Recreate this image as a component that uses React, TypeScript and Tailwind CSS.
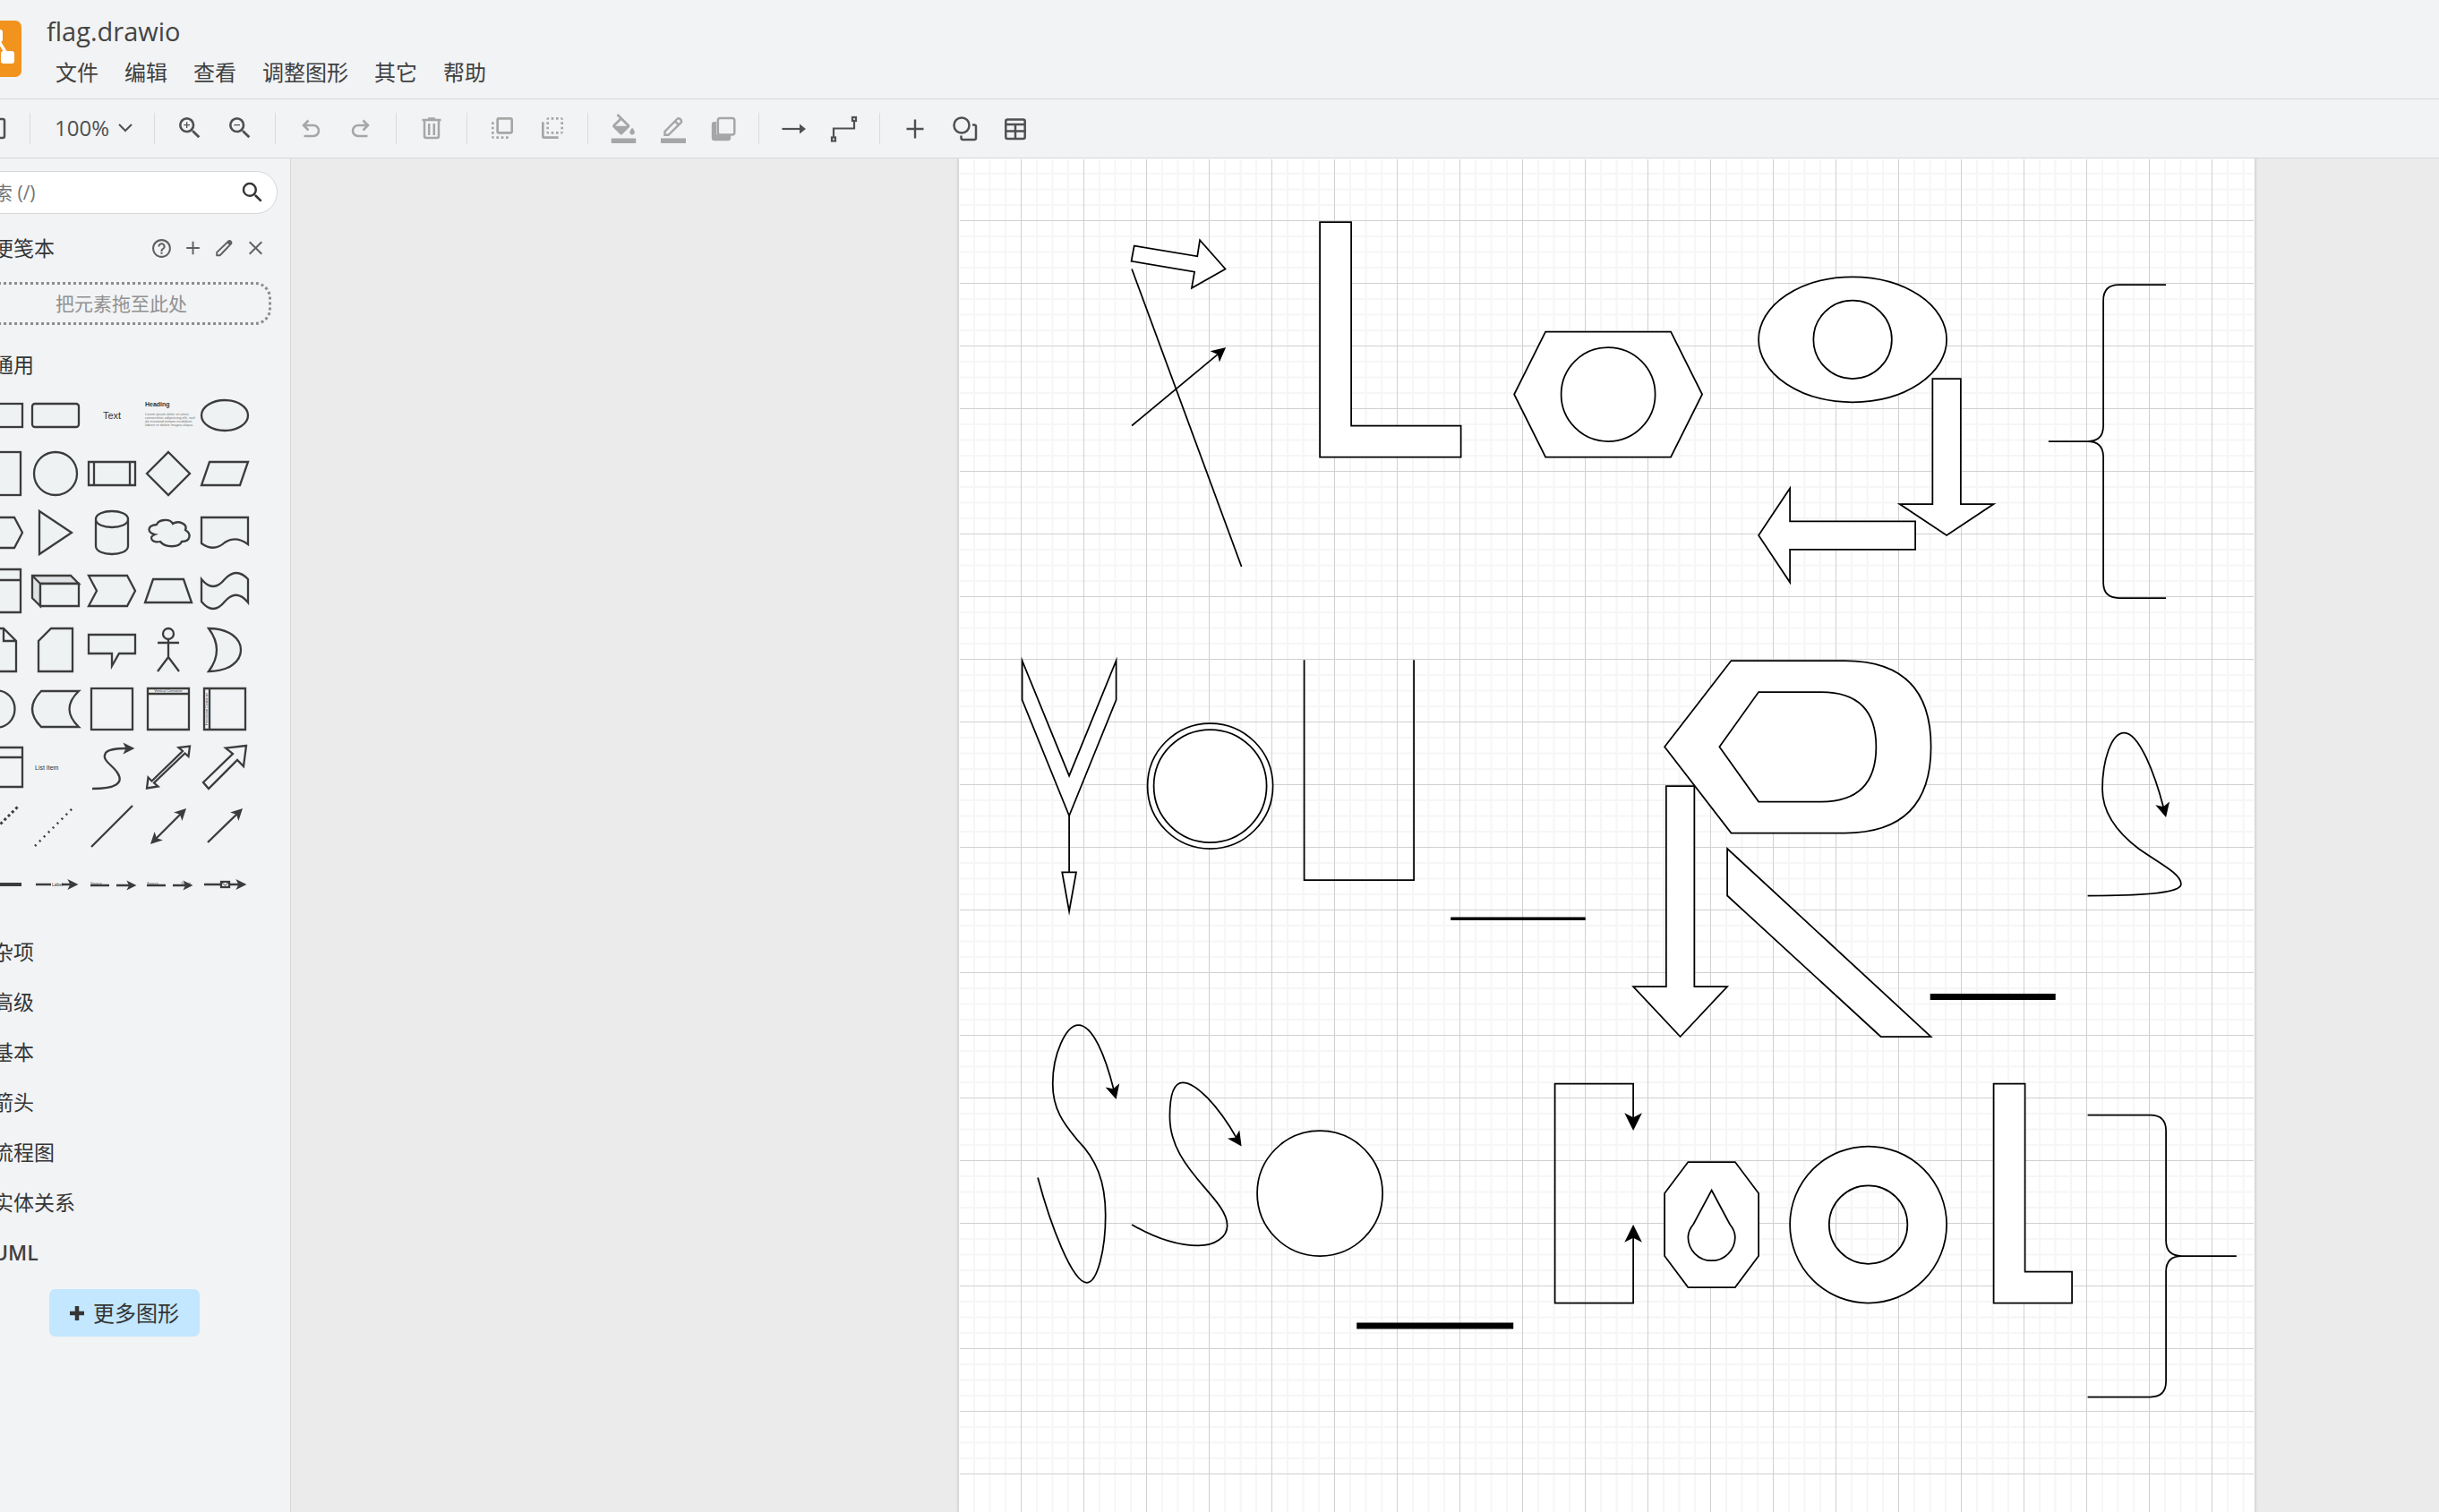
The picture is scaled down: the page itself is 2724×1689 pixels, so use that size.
import React from 'react';
import { MdSearch, MdFlipToFront, MdFlipToBack, MdOutlineZoomIn, MdOutlineZoomOut, MdHelpOutline } from 'react-icons/md';

const menus = ['文件', '编辑', '查看', '调整图形', '其它', '帮助'];
const sections = ['杂项', '高级', '基本', '箭头', '流程图', '实体关系', 'UML'];

function Glyph({ children }: { children: React.ReactNode }) {
  return (
    <svg
      viewBox="-18 -18 36 36"
      className="size-9"
      fill="none"
      stroke="currentColor"
      strokeWidth={2.5}
      aria-hidden="true"
    >
      {children}
    </svg>
  );
}

function Tool({ label, off, children }: { label: string; off?: boolean; children: React.ReactNode }) {
  return (
    <button
      type="button"
      aria-label={label}
      disabled={off}
      className="flex h-14 w-14 shrink-0 items-center justify-center text-[#505050] disabled:text-[#a6a6a6]"
    >
      {children}
    </button>
  );
}

function Divider() {
  return (
    <span className="flex h-[35px] w-[23px] shrink-0 justify-center">
      <span className="w-px bg-[#d9dbdd]" />
    </span>
  );
}

function Header() {
  return (
    <header className="flex h-[111px] shrink-0 border-b border-[#d5d7d9]">
      <a href="#home" aria-label="draw.io" className="mt-[23px] ml-[9px] size-[63px] shrink-0">
        <svg viewBox="0 0 63 63" className="size-full" aria-hidden="true">
          <rect width="63" height="63" rx="7" fill="#f2931e" />
          <path d="M29 22 L17 38 M37 22 L47 38" stroke="#fff" strokeWidth="3.5" />
          <rect x="23" y="10" width="19" height="14" rx="3" fill="#fff" />
          <rect x="8" y="34" width="15" height="14" rx="3" fill="#fff" />
          <rect x="40" y="34" width="15" height="14" rx="3" fill="#fff" />
        </svg>
      </a>
      <div className="ml-7 pt-[15px]">
        <h1 className="text-[29px] leading-10 text-[#454545]">flag.drawio</h1>
        <nav className="mt-2 ml-[10px] flex gap-[29px]">
          {menus.map((m) => (
            <button key={m} type="button" className="text-[24px] leading-9 text-[#404040]">
              {m}
            </button>
          ))}
        </nav>
      </div>
    </header>
  );
}

function Toolbar() {
  return (
    <div role="toolbar" className="flex h-[66px] shrink-0 items-center border-b border-[#d5d7d9] pb-px pl-[14px]">
      <Tool label="格式">
        <Glyph>
          <rect x="-11" y="-10" width="22" height="21" rx="2" />
          <path d="M-3 -10 V11" />
        </Glyph>
      </Tool>
      <Divider />
      <button
        type="button"
        className="flex h-14 w-[116px] shrink-0 items-center gap-[10px] pl-4 text-[24px] leading-9 text-[#505050]"
      >
        100%
        <svg viewBox="0 0 16 10" className="h-[10px] w-4" fill="none" stroke="currentColor" strokeWidth="2" aria-hidden="true">
          <path d="M1 1 L8 8 L15 1" />
        </svg>
      </button>
      <Divider />
      <Tool label="放大">
        <MdOutlineZoomIn className="size-8" />
      </Tool>
      <Tool label="缩小">
        <MdOutlineZoomOut className="size-8" />
      </Tool>
      <Divider />
      <Tool label="撤销" off>
        <Glyph>
          <path d="M-2.5 -8.5 L-8 -3 L-2.5 2.5 M-8 -3 H3 a5.5 5.5 0 0 1 0 12 H-7.5" />
        </Glyph>
      </Tool>
      <Tool label="重做" off>
        <Glyph>
          <path d="M2.5 -8.5 L8 -3 L2.5 2.5 M8 -3 H-3 a5.5 5.5 0 0 0 0 12 H7.5" />
        </Glyph>
      </Tool>
      <Divider />
      <Tool label="删除" off>
        <Glyph>
          <path d="M-10.5 -9 H10.5 M-4 -10.5 H4" />
          <path d="M-8 -8 V9 a2 2 0 0 0 2 2 H6 a2 2 0 0 0 2 -2 V-8 M-2.8 -5 V8 M2.8 -5 V8" />
        </Glyph>
      </Tool>
      <Divider />
      <Tool label="移至前面" off>
        <MdFlipToFront className="size-8" />
      </Tool>
      <Tool label="移至后面" off>
        <MdFlipToBack className="size-8" />
      </Tool>
      <Divider />
      <Tool label="填充颜色" off>
        <svg viewBox="0 0 24 24" className="size-[33px]" fill="currentColor" aria-hidden="true">
          <path d="M16.56 8.94L7.62 0 6.21 1.41l2.38 2.38-5.15 5.15a1.49 1.49 0 000 2.12l5.5 5.5c.29.29.68.44 1.06.44s.77-.15 1.06-.44l5.5-5.5c.59-.58.59-1.53 0-2.12zM5.21 10L10 5.21 14.79 10H5.21zM19 11.5s-2 2.17-2 3.5c0 1.1.9 2 2 2s2-.9 2-2c0-1.33-2-3.5-2-3.5z" />
          <path d="M2 20h20v4H2z" />
        </svg>
      </Tool>
      <Tool label="线条颜色" off>
        <Glyph>
          <path d="M-9.5 7.8 V4 L4.2 -10 a2.4 2.4 0 0 1 3.4 0 l.8 .8 a2.4 2.4 0 0 1 0 3.4 L-5.5 7.8 Z" />
          <path d="M2 -7.5 L6 -3.5" />
          <path d="M-14 14.2 H14" strokeWidth="5.5" />
        </Glyph>
      </Tool>
      <Tool label="阴影" off>
        <Glyph>
          <path
            d="M-8 -7 H-10 a3.2 3.2 0 0 0 -3.2 3.2 V11 a3.2 3.2 0 0 0 3.2 3.2 H5 a3.2 3.2 0 0 0 3.2 -3.2 V8 H-5 a3 3 0 0 1 -3 -3 Z"
            fill="currentColor"
            stroke="none"
          />
          <rect x="-6.2" y="-11" width="18.5" height="18.5" rx="2.5" />
        </Glyph>
      </Tool>
      <Divider />
      <Tool label="连接">
        <Glyph>
          <path d="M-13.5 1 H7" strokeWidth="2.2" />
          <path d="M6 -4.5 L13 1 L6 6.5 Z" fill="currentColor" stroke="none" />
        </Glyph>
      </Tool>
      <Tool label="航点">
        <Glyph>
          <g strokeWidth="2.2">
            <path d="M-12 10 V0.5 H11 V-8" />
            <rect x="-14" y="10.500" width="4" height="4" />
            <rect x="9" y="-12" width="4" height="4" />
          </g>
        </Glyph>
      </Tool>
      <Divider />
      <Tool label="插入">
        <Glyph>
          <path d="M-9.5 1 H9.5 M0 -9.5 V11.5" strokeWidth="2.4" />
        </Glyph>
      </Tool>
      <Tool label="图形">
        <Glyph>
          <circle cx="-4" cy="-3" r="8.5" />
          <path d="M8 -3.5 H10 a2 2 0 0 1 2 2 V11 a2 2 0 0 1 -2 2 H-2.5 a2 2 0 0 1 -2 -2 V8.5" />
        </Glyph>
      </Tool>
      <Tool label="表格">
        <Glyph>
          <rect x="-10.7" y="-9.5" width="21.4" height="21.5" rx="2" />
          <path d="M-10.7 -4 H10.7 M-10.7 3.5 H10.7 M0 -4 V12" />
        </Glyph>
      </Tool>
    </div>
  );
}

/* Solid arrow head whose tip lies on (x, y) and points along the angle. */
function Head({ x, y, a, u = 7 }: { x: number; y: number; a: number; u?: number }) {
  return (
    <path
      transform={`translate(${x} ${y}) rotate(${a})`}
      d={`M-1.1 0 L${-1.1 - u} ${-u / 2} L${-1.1 - 0.75 * u} 0 L${-1.1 - u} ${u / 2} Z`}
      fill="currentColor"
    />
  );
}

const shapes: [string, React.ReactNode][] = [
  ['矩形', <rect x="-26" y="-13" width="52" height="26" />],
  ['圆角矩形', <rect x="-26" y="-13" width="52" height="26" rx="3" />],
  ['文本', <text x="0" y="4" textAnchor="middle" fontSize="11" fill="#333" stroke="none">Text</text>],
  [
    '文本框',
    <g stroke="none">
      <text x="-26" y="-10" fontSize="7" fontWeight="700" fill="#333">Heading</text>
      <g fontSize="4" fill="#777">
        <text x="-26" y="0">Lorem ipsum dolor sit amet,</text>
        <text x="-26" y="4">consectetur adipisicing elit, sed</text>
        <text x="-26" y="8">do eiusmod tempor incididunt</text>
        <text x="-26" y="12">labore et dolore magna aliqua.</text>
      </g>
    </g>,
  ],
  ['椭圆', <ellipse rx="26" ry="17" />],
  ['正方形', <rect x="-24" y="-24" width="48" height="48" />],
  ['圆', <circle r="24" />],
  ['流程', <path d="M-26 -13 H26 V13 H-26 Z M-20 -13 V13 M20 -13 V13" />],
  ['菱形', <path d="M0 -24 L24 0 L0 24 L-24 0 Z" />],
  ['平行四边形', <path d="M-17 -13 H26 L17 13 H-26 Z" />],
  ['六边形', <path d="M-17 -17 H17 L26 0 L17 17 H-17 L-26 0 Z" />],
  ['三角形', <path d="M-18 -24 L18 0 L-18 24 Z" />],
  ['圆柱', <path d="M-18 -15 C-18 -27 18 -27 18 -15 V15 C18 27 -18 27 -18 15 Z M-18 -15 C-18 -3 18 -3 18 -15" />],
  ['云', <path d="M-13 -9 C-11 -15 2 -16 5 -10 C11 -14 22 -10 19 -3 C26 1 25 10 15 10 C12 17 -4 17 -9 10 C-18 12 -23 5 -15 2 C-24 0 -24 -8 -13 -9 Z" />],
  ['文档', <path d="M-26 -17 H26 V13 Q12 3 0 11 Q-12 22 -26 12 Z" />],
  ['内部存储', <path d="M-24 -24 H24 V24 H-24 Z M-24 -12 H24" />],
  [
    '立方体',
    <g>
      <path d="M-26 -17 H17 L26 -8 H-17 V17 L-26 8 Z" fill="#dfe2e5" />
      <path d="M-26 -17 L-17 -8 M-17 -8 H26 V17 H-17 Z" />
    </g>,
  ],
  ['步骤', <path d="M-26 -17 H17 L26 0 L17 17 H-26 L-17 0 Z" />],
  ['梯形', <path d="M-17 -13 H17 L26 13 H-26 Z" />],
  ['纸带', <path d="M-26 -13 Q-13 3 0 -13 Q13 -27 26 -13 V13 Q13 -3 0 12 Q-13 28 -26 12 Z" />],
  ['便签', <path d="M-19 -24 H5 L19 -10 V24 H-19 Z M5 -24 V-10 H19" />],
  ['卡片', <path d="M-5 -24 H19 V24 H-19 V-10 Z" />],
  ['标注', <path d="M-26 -17 H26 V4 H8 L0 18 V4 H-26 Z" />],
  ['角色', <g><circle cy="-18" r="6" /><path d="M0 -12 V8 M-12 -8 H12 M-12 24 L0 8 L12 24" /></g>],
  ['或', <path d="M-18 -24 C30 -24 30 24 -18 24 C-6 8 -6 -8 -18 -24 Z" />],
  ['与', <path d="M-26 -21 H-5 C25 -21 25 21 -5 21 H-26 Z" />],
  ['数据存储', <path d="M-16 -20 H26 Q5 0 26 20 H-16 Q-36 0 -16 -20 Z" />],
  ['容器', <rect x="-23" y="-23" width="46" height="46" fill="none" />],
  [
    '纵向容器',
    <g>
      <path d="M-23 -23 H23 V23 H-23 Z M-23 -17 H23" fill="none" />
      <text x="0" y="-19" textAnchor="middle" fontSize="4" fill="#333" stroke="none">Vertical Container</text>
    </g>,
  ],
  [
    '横向容器',
    <g>
      <path d="M-23 -23 H23 V23 H-23 Z M-17 -23 V23" fill="none" />
      <text transform="rotate(-90)" x="0" y="-19" textAnchor="middle" fontSize="4" fill="#333" stroke="none">Horizontal Container</text>
    </g>,
  ],
  ['列表', <path d="M-26 -22 H26 V22 H-26 Z M-26 -11 H26" fill="none" />],
  ['列表项', <text x="-23" y="3" fontSize="7" fill="#333" stroke="none">List Item</text>],
  ['曲线', <g fill="none"><path d="M-22 24 C4 24 14 18 6 6 C0 -3 -12 -8 -7 -16 C-4 -20 4 -21 16 -21" /><Head x={24} y={-21} a={0} u={8} /></g>],
  [
    '双向块箭头',
    <path
      d="M24 -23.500 L22.500 -12 L18.500 -15.500 L-16 17.500 L-11.500 21.500 L-24 23.500 L-22.500 11.500 L-18.500 15.500 L16 -18 L11.500 -22 Z"
      fill="none"
    />,
  ],
  ['块箭头', <path d="M24 -24 L1 -21.500 L9 -15 L-24 17 L-18 24 L14 -8 L21 -1 Z" fill="none" />],
  ['虚线', <path d="M-24 23 L22 -23" strokeWidth="3" strokeDasharray="3 3" />],
  ['点线', <path d="M-23 22 L20 -21" strokeWidth="2.5" strokeDasharray="2 5" />],
  ['线', <path d="M-23 23 L23 -23" />],
  ['双向连接', <g><path d="M-15 15 L15 -15" /><Head x={19} y={-19} a={-45} u={8} /><Head x={-19} y={19} a={135} u={8} /></g>],
  ['定向连接', <g><path d="M-19 18 L15 -15" /><Head x={19} y={-19} a={-45} u={8} /></g>],
  ['链接', <path d="M-26 0 H25" strokeWidth="4" />],
  ['带标签连接', <g><path d="M-22 0 H-5 M7 0 H17" /><text x="-4" y="2" fontSize="5" fill="#333" stroke="none">Label</text><Head x={24} y={0} a={0} u={7} /></g>],
  ['双标签连接', <g><path d="M-24 1 H-3 M5 1 H19" /><text x="-24" y="0" fontSize="4" fill="#555" stroke="none">Source</text><Head x={26} y={1} a={0} u={6} /></g>],
  ['三标签连接', <g><path d="M-24 1 H-3 M5 1 H19" /><text x="-24" y="0" fontSize="4" fill="#555" stroke="none">Source</text><text x="14" y="0" fontSize="4" fill="#555" stroke="none">Target</text><Head x={26} y={1} a={0} u={6} /></g>],
  ['带符号连接', <g><path d="M-23 0 H17" /><rect x="-4" y="-3" width="9" height="6" fill="#f1f3f5" /><path d="M-3 -2 L0.500 1 L4 -2" strokeWidth="1" /><Head x={23} y={0} a={0} u={7} /></g>],
];

function Sidebar() {
  const action = 'flex h-[35px] w-[35px] items-center justify-center text-[#606060]';
  return (
    <aside className="flex w-[373px] shrink-0 flex-col overflow-hidden border-r border-[#d5d7d9]">
      <label className="mt-[14px] mr-[14px] ml-2 flex h-12 shrink-0 items-center rounded-full border border-[#d5d7d9] bg-white pr-3 pb-px pl-[11px]">
        <input
          type="text"
          aria-label="搜索图形"
          placeholder="搜索 (/)"
          className="min-w-0 flex-1 bg-transparent text-[21px] leading-8 outline-none placeholder:text-[#757575]"
        />
        <MdSearch className="size-[30px] text-[#353535]" />
      </label>
      <div className="mt-[10px] flex h-14 shrink-0 items-center pr-[21px] pl-10">
        <h2 className="flex-1 text-[23px] leading-9 text-[#353535]">便笺本</h2>
        <button type="button" aria-label="帮助" className={action}>
          <MdHelpOutline className="size-[25px]" />
        </button>
        <button type="button" aria-label="添加" className={action}>
          <Glyph><path d="M-7.500 0 H7.500 M0 -7.500 V7.500" strokeWidth="2" /></Glyph>
        </button>
        <button type="button" aria-label="编辑" className={action}>
          <Glyph>
            <path d="M-8.500 8.500 V5 L4.500 -7.500 a2 2 0 0 1 3 0 a2 2 0 0 1 0 3 L-5 8.500 Z" strokeWidth="2" />
            <path d="M3 -6 L6 -9 L9 -6 L6 -3 Z" fill="currentColor" stroke="none" />
          </Glyph>
        </button>
        <button type="button" aria-label="关闭" className={action}>
          <Glyph><path d="M-7 -7 L7 7 M7 -7 L-7 7" strokeWidth="2" /></Glyph>
        </button>
      </div>
      <div className="mt-[10px] mr-[21px] ml-4 flex h-12 shrink-0 items-center justify-center rounded-[18px] border-3 border-dotted border-[#8c8c8c] text-[21px] leading-8 text-[#919191]">
        把元素拖至此处
      </div>
      <button type="button" className="mt-5 h-12 shrink-0 pl-10 text-left text-[23px] leading-9 text-[#353535]">
        通用
      </button>
      <div className="ml-[15px] grid h-[590px] w-[315px] shrink-0 grid-cols-5 grid-rows-9">
        {shapes.map(([name, art]) => (
          <button key={name} type="button" aria-label={name} className="flex items-center justify-center text-[#3c3c3c]">
            <svg
              viewBox="-28 -28 56 56"
              className="size-14 overflow-visible font-['Liberation_Sans']"
              fill="#eef2f3"
              stroke="currentColor"
              strokeWidth="2.3"
              aria-hidden="true"
            >
              {art}
            </svg>
          </button>
        ))}
      </div>
      <div className="mt-[14px] flex shrink-0 flex-col">
        {sections.map((s) => (
          <button
            key={s}
            type="button"
            className="h-14 pl-10 text-left text-[23px] leading-9 text-[#353535] last:font-semibold last:text-[#404040]"
          >
            {s}
          </button>
        ))}
      </div>
      <button
        type="button"
        className="mt-[13px] ml-[103px] flex h-[53px] w-[168px] shrink-0 items-center justify-center gap-[10px] rounded-[7px] bg-[#c2e7ff] text-[24px] leading-9 text-[#353535]"
      >
        <svg viewBox="0 0 16 16" className="size-4" stroke="currentColor" strokeWidth="4.5" aria-hidden="true">
          <path d="M0 8 H16 M8 0 V16" />
        </svg>
        更多图形
      </button>
    </aside>
  );
}

const steps = Array.from({ length: 84 }, (_, i) => i + 1);

function Grid() {
  const at = (i: number) => i * 17.5 - 0.5;
  const minor = steps.filter((i) => i % 4 !== 0);
  const major = steps.filter((i) => i % 4 === 0);
  return (
    <g>
      <path d={minor.map((i) => `M${at(i)} 1 V1689 M1 ${at(i)} H1446`).join(' ')} stroke="#f6f6f6" strokeWidth="2" />
      <path d={major.map((i) => `M${at(i)} 1 V1689 M1 ${at(i)} H1446`).join(' ')} stroke="#d0d0d0" strokeWidth="1" />
    </g>
  );
}

function Diagram() {
  return (
    <g
      transform="translate(0.6 1) scale(1.75)"
      className="text-black"
      fill="#fff"
      stroke="currentColor"
      strokeWidth="1"
      strokeMiterlimit="10"
    >
      <path d="M111.500 55.200 L151.800 61.900 L153.400 51.500 L169.700 70 L148.200 82.200 L150 71.800 L109.700 65 Z" />
      <path d="M110 70 L180 260" />
      <path d="M110 170 L166 123.500" />
      <Head x={170} y={120} a={-40} />
      <path d="M230 40 H250 V170 H320 V190 H230 Z" />
      <path d="M374 110 H454 L474 150 L454 190 H374 L354 150 Z" />
      <circle cx="414" cy="150" r="30" />
      <ellipse cx="570" cy="115" rx="60" ry="40" />
      <circle cx="570" cy="115" r="25" />
      <path d="M621 140 H639 V220 H660 L630 240 L600 220 H621 Z" />
      <path d="M610 231 V249 H530 V270 L510 240 L530 210 V231 Z" />
      <path
        d="M770 80 H740 Q730 80 730 90 V170 Q730 180 720 180 H695 H720 Q730 180 730 190 V270 Q730 280 740 280 H770"
        fill="none"
      />

      <path d="M40 320 V345 L70 419 L100 345 V320 L70 393.500 Z" />
      <path d="M70 419 V455 M65.500 455 H74.500 L70 480 Z" />
      <circle cx="160" cy="400" r="40" />
      <circle cx="160" cy="400" r="36" />
      <path d="M220 319.500 V460 H290 V319.500" fill="none" />
      <path d="M313.500 484.700 H399.500" strokeWidth="2" />
      <path d="M451 400 H469 V528 H490 L460 560 L430 528 H451 Z" />
      <path d="M450 375 L492.500 320 H565 Q620 320 620 375 Q620 430 565 430 H492.500 Z" />
      <path d="M485 375 L510 340 H550 Q585 340 585 375 Q585 410 550 410 H510 Z" />
      <path d="M490 440 L620 560 H588 L490 470 Z" />
      <path d="M619.500 534.500 H699.500" strokeWidth="4" />
      <g fill="none">
        <path d="M720 470 C750 470 779.600 469 779.600 462.500 C779.600 456 766 449.500 752.500 440 C740 430.500 729.400 418 729.400 402 C729.400 384 735 366 743.300 366 C753 366 763 393 768.500 414" />
        <path d="M50 650 C58 680 72 717 81.300 717 C88 717 93.200 696 93.200 674 C93.200 652 87 638 75.700 626.500 C66 615 59.500 606 59.500 590 C59.500 571 68 552.600 75.900 552.600 C85 552.600 93 572 98.500 594" />
        <path d="M110 680 C122 687 138 693.400 152.500 693.400 C163 693.400 170.900 688 170.900 680.500 C170.900 673 164 665 156.600 656.500 C144 642 134.200 629 134.200 611 C134.200 600 136 589.300 142.500 589.300 C151 589.300 165 604 177 625" />
      </g>
      <Head x={770} y={420} a={76} />
      <Head x={100} y={600} a={75} />
      <Head x={180} y={630} a={56} />
      <circle cx="230" cy="660" r="40" />
      <path d="M253.500 744.500 H353.500" strokeWidth="4" />

      <path d="M430 612 V590 H380 V730 H430 V688" fill="none" />
      <Head x={430} y={620} a={90} u={9} />
      <Head x={430} y={680} a={-90} u={9} />
      <path d="M465 640 H495 L510 660 V700 L495 720 H465 L450 700 V660 Z" />
      <path d="M480 658 L491.600 679.700 C493.500 682 495 685 495 688 A15 15 0 0 1 465 688 C465 685 466.500 682 468.400 679.700 Z" />
      <path
        d="M530 680 a50 50 0 1 0 100 0 a50 50 0 1 0 -100 0 Z M555 680 a25 25 0 1 0 50 0 a25 25 0 1 0 -50 0 Z"
        fillRule="evenodd"
      />
      <path d="M660 590 H680 V710 H710 V730 H660 Z" />
      <path
        d="M720 610 H760 Q770 610 770 620 V690 Q770 700 780 700 H815 H780 Q770 700 770 710 V780 Q770 790 760 790 H720"
        fill="none"
      />
    </g>
  );
}

export default function App() {
  return (
    <div className="h-screen overflow-hidden bg-[#f1f3f5]">
      <div className="-ml-12 flex h-full flex-col font-['Open_Sans','Noto_Sans_CJK_SC',sans-serif]">
        <Header />
        <Toolbar />
        <div className="flex min-h-0 flex-1">
          <Sidebar />
          <main className="flex min-w-0 flex-1 overflow-hidden bg-[#ebebeb]">
            <div className="ml-[746px] w-[1447px] shrink-0 bg-white shadow-[0_0_3px_1px_#c8c8c8]">
              <svg className="block size-full" role="img" aria-label="flag.drawio">
                <Grid />
                <Diagram />
              </svg>
            </div>
          </main>
        </div>
      </div>
    </div>
  );
}
